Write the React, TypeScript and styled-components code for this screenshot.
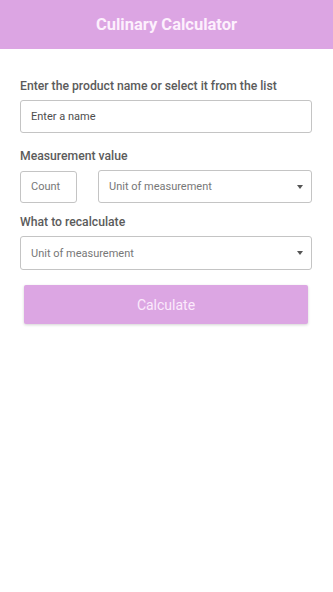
import React from "react";
import styled, { createGlobalStyle } from "styled-components";

const Global = createGlobalStyle`
  html, body { margin: 0; padding: 0; background: #fff; }
  body { font-family: Roboto, "Noto Sans", sans-serif; }
  * { box-sizing: border-box; }
`;

const Page = styled.div`
  width: 333px;
  min-height: 592px;
  background: #fff;
`;

const Header = styled.header`
  height: 49px;
  background: #dca5e3;
  display: flex;
  align-items: center;
  justify-content: center;
`;

const Title = styled.h1`
  margin: 0;
  font-size: 16.5px;
  font-weight: 700;
  color: #fdf0fd;
`;

const Form = styled.div`
  padding: 29px 21px 0 20px;
  display: flex;
  flex-direction: column;
`;

const Label = styled.div`
  font-size: 12.2px;
  font-weight: 500;
  color: #5b5b5b;
  line-height: 16px;
  margin-bottom: 6px;
`;

const Field = styled.div<{ $width?: number; $height?: number }>`
  height: ${(p) => p.$height ?? 33}px;
  ${(p) => (p.$width ? `width: ${p.$width}px; flex: none;` : "flex: 1;")}
  border: 1px solid #c4c4c4;
  border-radius: 3px;
  display: flex;
  align-items: center;
  padding: 0 10px;
  font-size: 11px;
  color: #666;
  background: #fff;
`;

const Placeholder = styled.span<{ $dark?: boolean }>`
  flex: 1;
  color: ${(p) => (p.$dark ? "#4d4d4d" : "#777")};
`;

const Caret = styled.span`
  width: 0;
  height: 0;
  border-left: 3.5px solid transparent;
  border-right: 3.5px solid transparent;
  border-top: 4px solid #555;
  margin-right: -2px;
`;

const Row = styled.div`
  display: flex;
  gap: 21px;
  align-items: center;
`;

const Group = styled.div<{ $gap: number }>`
  margin-bottom: ${(p) => p.$gap}px;
`;

const Button = styled.button`
  margin: 0 4px;
  height: 39px;
  border: none;
  border-radius: 2px;
  background: #dca6e3;
  color: #fbeafc;
  font-family: Roboto, sans-serif;
  font-size: 14px;
  box-shadow: 0 1px 3px rgba(0, 0, 0, 0.18);
`;

export default function App() {
  return (
    <Page>
      <Global />
      <Header>
        <Title>Culinary Calculator</Title>
      </Header>
      <Form>
        <Group $gap={15}>
          <Label>Enter the product name or select it from the list</Label>
          <Field>
            <Placeholder $dark>Enter a name</Placeholder>
          </Field>
        </Group>
        <Group $gap={11}>
          <Label>Measurement value</Label>
          <Row>
            <Field $width={57} $height={32}>
              <Placeholder>Count</Placeholder>
            </Field>
            <Field $height={33}>
              <Placeholder>Unit of measurement</Placeholder>
              <Caret />
            </Field>
          </Row>
        </Group>
        <Group $gap={15}>
          <Label>What to recalculate</Label>
          <Field $height={34}>
            <Placeholder>Unit of measurement</Placeholder>
            <Caret />
          </Field>
        </Group>
        <Button>Calculate</Button>
      </Form>
    </Page>
  );
}
